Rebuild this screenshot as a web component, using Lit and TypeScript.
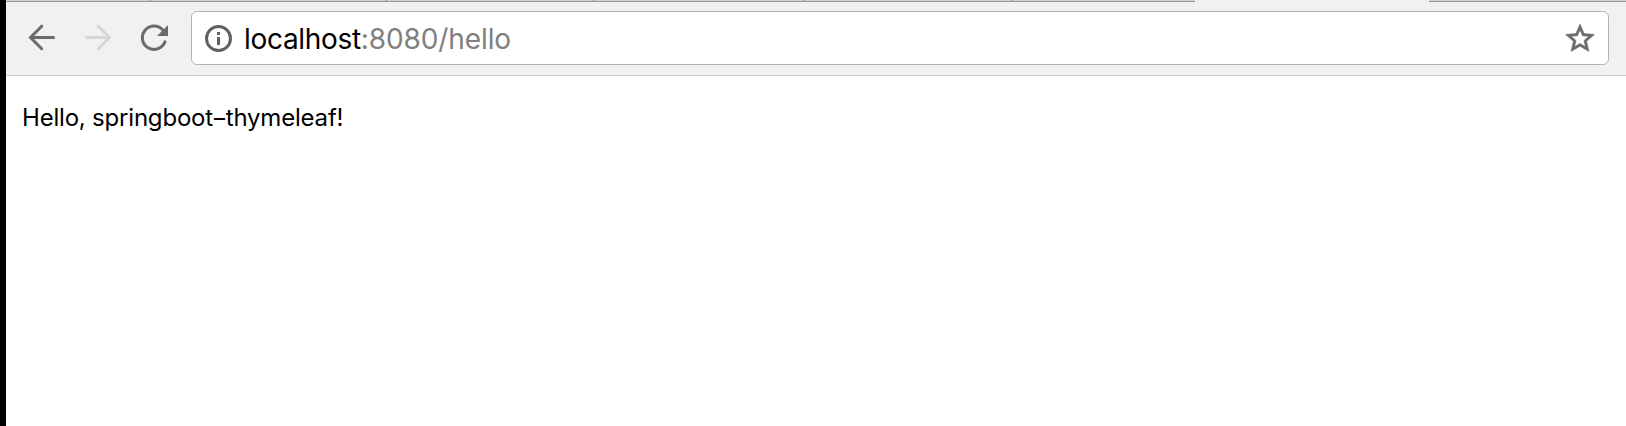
import { LitElement, html, css } from "lit";
import { customElement } from "lit/decorators.js";

@customElement("app-root")
export class AppRoot extends LitElement {
  static styles = css`
    :host { display: flex; flex-direction: column; box-sizing: border-box; width: 100%; height: 426px; border-left: 6px solid #000; background: #fff; overflow: hidden; }
    svg { display: block; flex: none; }
    .tabs { display: grid; grid-template-columns: 145px 236px 207px 210px 208px 183px 234px 1fr; height: 2px; flex: none; background: #f1f1f1; }
    .tab { box-sizing: border-box; border-bottom: 1px solid #999; border-right: 1px solid #888; background: #d2d2d2; }
    .tab.active { background: #f1f1f1; border: 0; }
    .tab.edge { border-right: 0; }
    .toolbar { display: flex; align-items: flex-start; box-sizing: border-box; height: 74px; flex: none; padding: 9px 17px 0 0; background: #f1f1f1; border-bottom: 1px solid #d0d0d0; }
    .nav { display: flex; width: 185px; flex: none; }
    .address { display: flex; align-items: center; box-sizing: border-box; flex: 1; height: 54px; border: 1px solid #b4b4b4; border-radius: 6px; background: #fff; }
    .url { flex: 1; margin-left: 3px; padding-top: 2px; font: 28px/52px Inter, sans-serif; letter-spacing: -0.1px; color: #808080; white-space: nowrap; }
    .host { color: #000; letter-spacing: -0.32px; }
    .page { margin: 0; padding: 26px 0 0 16px; font: 24px/32px Inter, sans-serif; letter-spacing: -0.2px; color: #000; white-space: nowrap; }
    .dash { display: inline-block; margin: 0 1px; transform: scaleX(1.45); }
  `;

  render() {
    return html`
      <div class="tabs">
        <div class="tab"></div><div class="tab"></div><div class="tab"></div><div class="tab"></div>
        <div class="tab"></div><div class="tab edge"></div><div class="tab active"></div><div class="tab edge"></div>
      </div>
      <div class="toolbar">
        <div class="nav">
          <svg width="185" height="54" viewBox="6 11 185 54" fill="none" stroke-width="3" stroke-linecap="round">
            <path stroke="#6b6b6b" d="M53.5 37.5H30.8M41.7 26.2 30.5 37.5 41.7 48.7" />
            <path stroke="#d6d6d6" d="M86.5 37.5H109.2M98.3 26.2 109.5 37.5 98.3 48.7" />
            <path stroke="#6b6b6b" d="M163 30.2A11.7 11.7 0 1 0 165 41.8" />
            <path fill="#6b6b6b" d="M168 25V36H157Z" />
          </svg>
        </div>
        <div class="address">
          <svg width="49" height="52" viewBox="192 12 49 52">
            <circle cx="218.5" cy="38.5" r="12" fill="none" stroke="#606060" stroke-width="3" />
            <path fill="#606060" d="M217 32h3v3h-3zM217 37h3v8h-3z" />
          </svg>
          <div class="url"><span class="host">localhost</span>:8080/hello</div>
          <svg width="48" height="52" viewBox="1560 12 48 52">
            <path transform="translate(1562.6 21.1) scale(1.45)" fill="#6b6b6b" stroke="#6b6b6b" stroke-width="0.4" d="M22 9.24l-7.19-.62L12 2 9.19 8.63 2 9.24l5.46 4.73L5.82 21 12 17.27 18.18 21l-1.63-7.03L22 9.24zM12 15.4l-3.76 2.27 1-4.28-3.32-2.88 4.38-.38L12 6.1l1.71 4.04 4.38.38-3.32 2.88 1 4.28L12 15.4z" />
          </svg>
        </div>
      </div>
      <p class="page">Hello, springboot<span class="dash">-</span>thymeleaf!</p>
    `;
  }
}
